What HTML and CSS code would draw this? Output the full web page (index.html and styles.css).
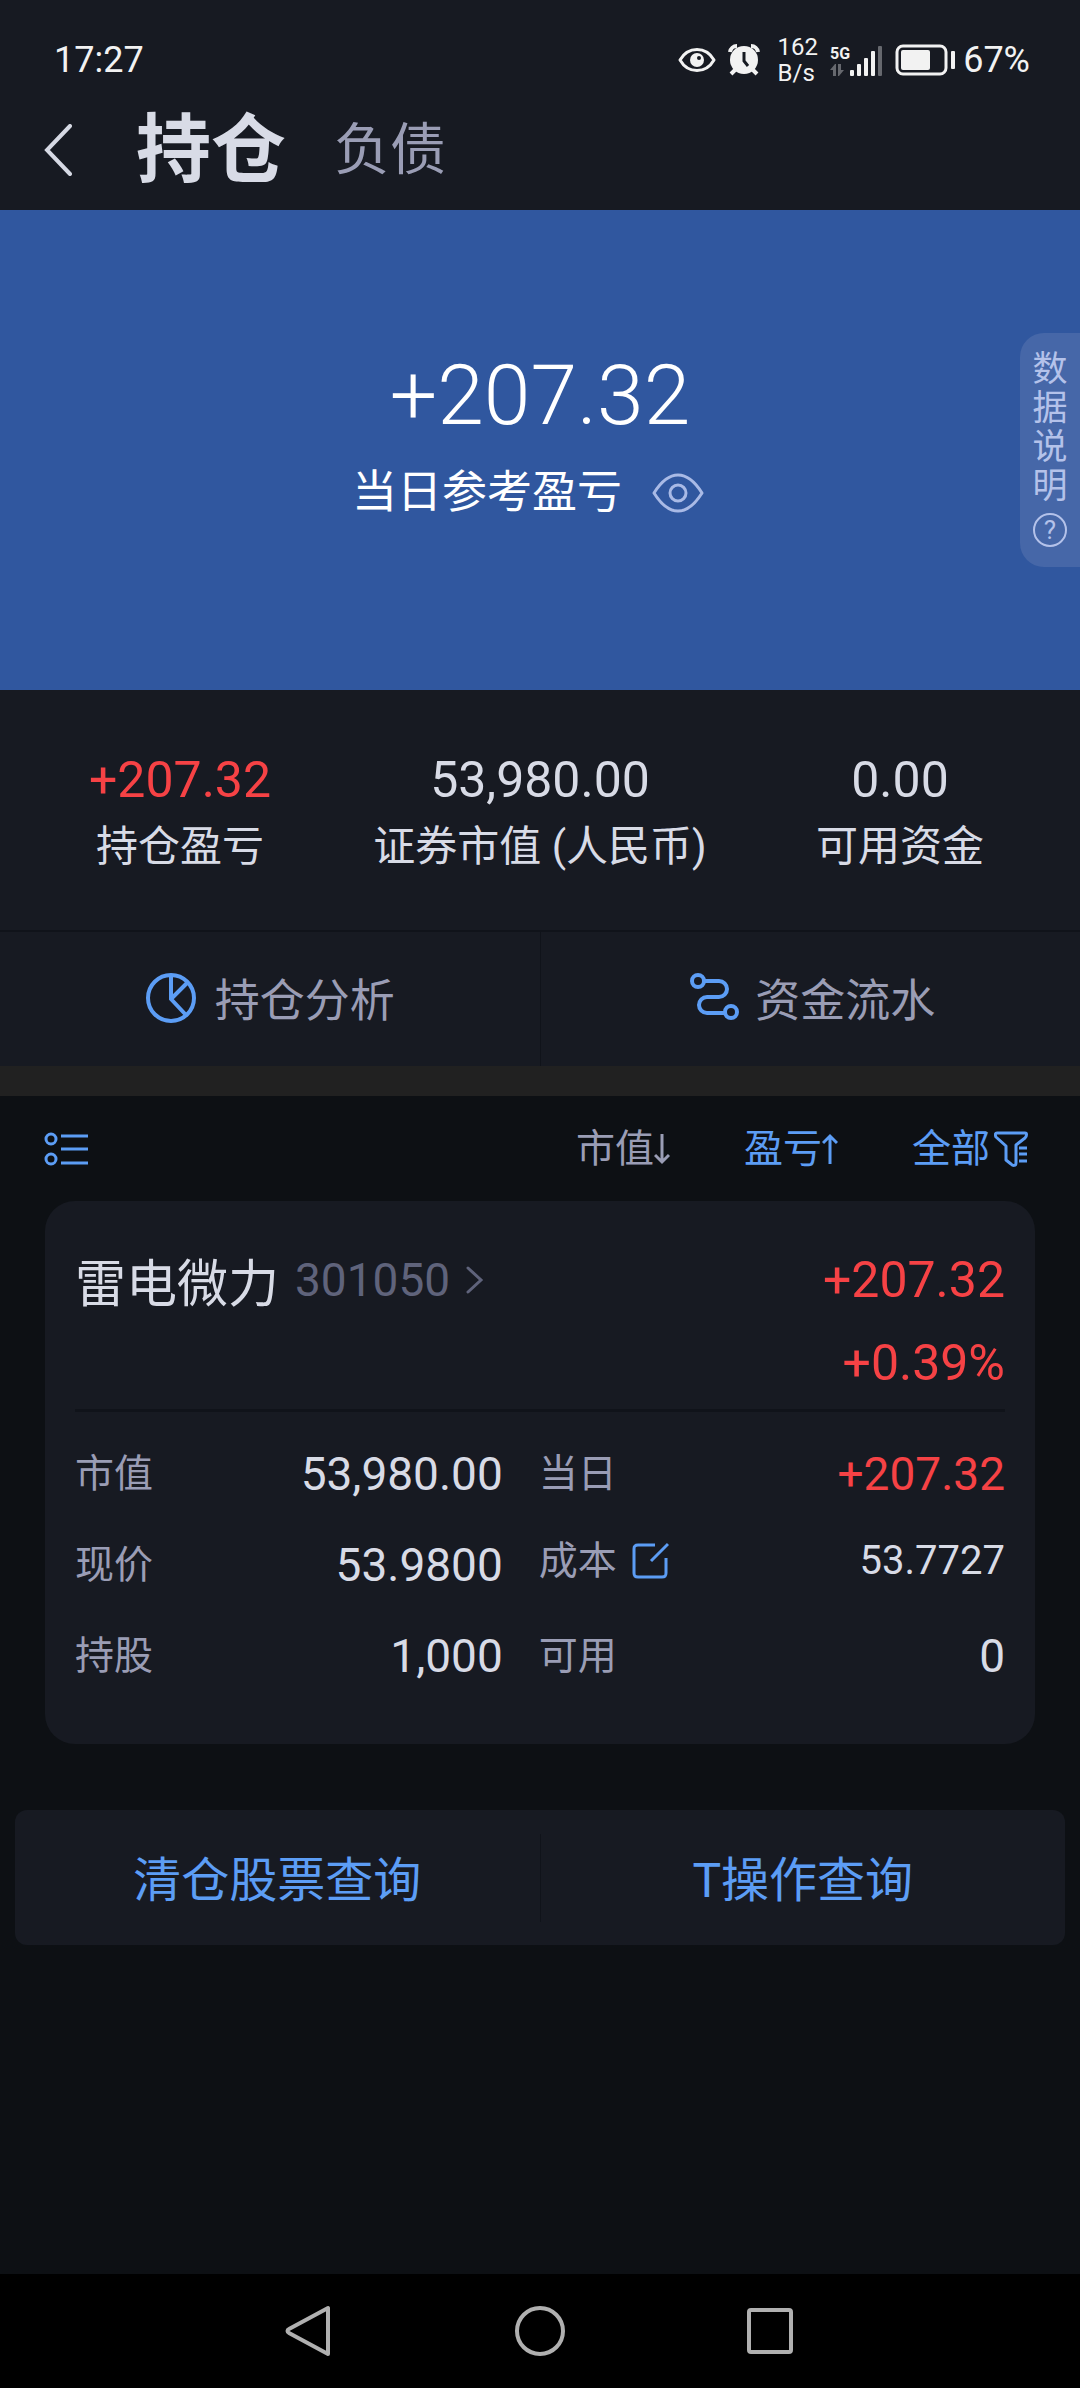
FILE: index.html
```html
<!DOCTYPE html>
<html lang="zh-CN">
<head>
    <meta charset="UTF-8">
    <meta name="viewport" content="width=device-width, initial-scale=1.0">
    <title>持仓</title>
    <link rel="stylesheet" href="styles.css">
</head>
<body>
    <div class="status-bar">
        <span class="status-time">17:27</span>
        <div class="status-icons">
            <svg class="status-eye" width="38" height="26" viewBox="0 0 38 26" fill="none">
                <path d="M2 13C10-1 28-1 36 13C28 27 10 27 2 13Z" stroke="#f2f2f2" stroke-width="3" stroke-linejoin="round"/>
                <circle cx="19" cy="13" r="7" fill="#f2f2f2"/>
                <circle cx="21" cy="11" r="2" fill="#171a22"/>
            </svg>
            <svg class="status-alarm" width="32" height="32" viewBox="0 0 32 32" fill="none">
                <path d="M2 8A7 7 0 0 1 9 2M30 8A7 7 0 0 0 23 2" stroke="#f2f2f2" stroke-width="4"/>
                <path d="M7 26L3 30M25 26L29 30" stroke="#f2f2f2" stroke-width="4"/>
                <circle cx="16" cy="16" r="14" fill="#f2f2f2"/>
                <path d="M16 8V17L20 22" stroke="#171a22" stroke-width="3"/>
            </svg>
            <span class="status-speed">162<br>B/s</span>
            <div class="status-signal">
                <div class="signal-type">
                    <span>5G</span>
                    <svg width="14" height="12" viewBox="0 0 14 12" fill="#66686e">
                        <path d="M0 6L5 0H6V12H3V6ZM8 0H11V6H14L9 12H8Z"/>
                    </svg>
                </div>
                <svg width="33" height="32" viewBox="0 0 33 32" fill="#f2f2f2">
                    <rect x="0" y="26" width="4" height="6" rx="1"/>
                    <rect x="7" y="20" width="4" height="12" rx="1"/>
                    <rect x="14" y="14" width="4" height="18" rx="1"/>
                    <rect x="21" y="7" width="4" height="25" rx="1"/>
                    <rect x="28" y="2" width="4" height="30" rx="1" fill="#66686e"/>
                </svg>
            </div>
            <svg class="status-battery" width="60" height="32" viewBox="0 0 60 32" fill="none">
                <rect x="2" y="2" width="49" height="28" rx="6" stroke="#f2f2f2" stroke-width="3"/>
                <rect x="6" y="6" width="29" height="20" rx="2" fill="#f2f2f2"/>
                <rect x="56" y="7" width="4" height="18" rx="1" fill="#f2f2f2"/>
            </svg>
            <span class="status-percent">67%</span>
        </div>
    </div>

    <header class="header">
        <button class="back-btn" aria-label="返回">
            <svg width="28" height="52" viewBox="0 0 28 52" fill="none" stroke="#d6d9e4" stroke-width="4" stroke-linecap="round">
                <path d="M26 2L3 26L26 50"/>
            </svg>
        </button>
        <nav class="tabs">
            <a href="#" class="tab active">持仓</a>
            <a href="#" class="tab">负债</a>
        </nav>
    </header>

    <section class="hero">
        <div class="hero-value">+207.32</div>
        <div class="hero-label">
            <span>当日参考盈亏</span>
            <button class="eye-btn" aria-label="隐藏金额">
                <svg width="52" height="40" viewBox="0 0 52 40" fill="none" stroke="#a9bae6" stroke-width="3">
                    <path d="M2 20C7 12 15 2 26 2S45 12 50 20C45 28 37 38 26 38S7 28 2 20Z" stroke-linejoin="round"/>
                    <circle cx="26" cy="20" r="8"/>
                </svg>
            </button>
        </div>
        <button class="data-note">
            <span>数</span><span>据</span><span>说</span><span>明</span>
            <i class="help">?</i>
        </button>
    </section>

    <section class="stats">
        <div class="stat">
            <div class="stat-value up">+207.32</div>
            <div class="stat-label">持仓盈亏</div>
        </div>
        <div class="stat">
            <div class="stat-value">53,980.00</div>
            <div class="stat-label">证券市值 (人民币)</div>
        </div>
        <div class="stat">
            <div class="stat-value">0.00</div>
            <div class="stat-label">可用资金</div>
        </div>
    </section>

    <div class="actions">
        <button class="action">
            <svg width="56" height="52" viewBox="0 0 56 52" fill="none" stroke="#5c9df5" stroke-width="4">
                <circle cx="26" cy="27" r="23"/>
                <path d="M26 4V28L41 44M26 28L42 12"/>
            </svg>
            <span>持仓分析</span>
        </button>
        <button class="action">
            <svg width="56" height="52" viewBox="0 0 56 52" fill="none" stroke="#5c9df5" stroke-width="4">
                <circle cx="13" cy="10" r="6"/>
                <circle cx="46" cy="41" r="6"/>
                <path d="M19 10H34A8 8 0 0 1 34 26H22A8 8 0 0 0 22 42H40"/>
            </svg>
            <span>资金流水</span>
        </button>
    </div>

    <main class="positions">
        <div class="toolbar">
            <button class="list-btn" aria-label="列表样式">
                <svg width="44" height="36" viewBox="0 0 44 36" fill="none" stroke="#5c9df5" stroke-width="3">
                    <circle cx="7" cy="8" r="5"/>
                    <circle cx="7" cy="28" r="5"/>
                    <path d="M17 5H44M17 18H44M17 32H44"/>
                </svg>
            </button>
            <div class="sorts">
                <button class="sort"><span>市值</span><svg width="16" height="32" viewBox="0 0 16 32" fill="none" stroke="currentColor" stroke-width="3">
                    <path d="M8 1V29M1 22L8 29L15 22"/>
                </svg></button>
                <button class="sort on"><span>盈亏</span><svg width="16" height="32" viewBox="0 0 16 32" fill="none" stroke="currentColor" stroke-width="3">
                    <path d="M8 31V3M1 10L8 3L15 10"/>
                </svg></button>
                <button class="sort on filter"><span>全部</span><svg width="34" height="36" viewBox="0 0 34 36" fill="none" stroke="currentColor" stroke-width="3" stroke-linejoin="round">
                    <path d="M3 2H31C33 2 33 5 31 7L22 14V32C22 35 19 35 17 33L12 29V15L2 6C1 4 1 2 3 2Z"/>
                    <path d="M25 17H33M25 23H33M25 30H33"/>
                </svg></button>
            </div>
        </div>

        <article class="card">
            <div class="card-head">
                <a href="#" class="stock">
                    <span class="stock-name">雷电微力</span>
                    <span class="stock-code">301050</span>
                    <svg width="18" height="28" viewBox="0 0 18 28" fill="none" stroke="#5f637b" stroke-width="3" stroke-linecap="round">
                        <path d="M2 2L15 14L2 26"/>
                    </svg>
                </a>
                <div class="profit up">
                    <div>+207.32</div>
                    <div>+0.39%</div>
                </div>
            </div>
            <div class="details">
                <dl class="col">
                    <div class="row"><dt>市值</dt><dd>53,980.00</dd></div>
                    <div class="row"><dt>现价</dt><dd>53.9800</dd></div>
                    <div class="row"><dt>持股</dt><dd>1,000</dd></div>
                </dl>
                <dl class="col">
                    <div class="row"><dt>当日</dt><dd class="up">+207.32</dd></div>
                    <div class="row cost">
                        <dt>成本
                            <button class="edit-btn" aria-label="修改成本">
                                <svg width="38" height="38" viewBox="0 0 38 38" fill="none" stroke="#5c9df5" stroke-width="3">
                                    <path d="M24 3H7C4 3 3 4 3 7V31C3 34 4 35 7 35H31C34 35 35 34 35 31V16M20 19L37 2"/>
                                </svg>
                            </button>
                        </dt>
                        <dd>53.7727</dd>
                    </div>
                    <div class="row"><dt>可用</dt><dd>0</dd></div>
                </dl>
            </div>
        </article>

        <div class="queries">
            <button class="query">清仓股票查询</button>
            <button class="query">T操作查询</button>
        </div>
    </main>

    <nav class="nav-bar">
        <button aria-label="后退">
            <svg width="52" height="52" viewBox="0 0 52 52" fill="none" stroke="#b0b0b0" stroke-width="4" stroke-linejoin="round">
                <path d="M44 3V49L5 28C3 27 3 25 5 24Z"/>
            </svg>
        </button>
        <button aria-label="主页">
            <svg width="52" height="52" viewBox="0 0 52 52" fill="none" stroke="#b0b0b0" stroke-width="4">
                <circle cx="26" cy="26" r="23"/>
            </svg>
        </button>
        <button aria-label="最近任务">
            <svg width="52" height="52" viewBox="0 0 52 52" fill="none" stroke="#b0b0b0" stroke-width="4">
                <rect x="5" y="5" width="42" height="42" rx="2"/>
            </svg>
        </button>
    </nav>
</body>
</html>
```
FILE: styles.css
```css
* {
    box-sizing: border-box;
}
body {
    margin: 0;
    min-height: 100vh;
    display: flex;
    flex-direction: column;
    background: #0d1014;
    color: #d8dbe6;
    font-family: Roboto, "Noto Sans CJK SC", sans-serif;
}
button {
    padding: 0;
    border: none;
    background: none;
    color: inherit;
    font: inherit;
    cursor: pointer;
}
a {
    color: inherit;
    text-decoration: none;
}
svg {
    display: block;
    flex-shrink: 0;
}
.up {
    color: #f64245;
}

/* status bar */
.status-bar {
    display: flex;
    justify-content: space-between;
    align-items: center;
    height: 100px;
    padding: 20px 50px 0 54px;
    background: #171a22;
    color: #f2f2f2;
    font-size: 36px;
}
.status-icons {
    display: flex;
    align-items: center;
}
.status-alarm {
    margin-left: 12px;
}
.status-speed {
    margin-left: 18px;
    font-size: 24px;
    line-height: 26px;
}
.status-signal {
    display: flex;
    align-items: flex-end;
    margin-left: 12px;
}
.signal-type {
    font-size: 16px;
    font-weight: 700;
    line-height: 20px;
}
.status-battery {
    margin: 0 8px 0 12px;
}

/* header */
.header {
    display: flex;
    align-items: center;
    height: 110px;
    padding: 0 44px 10px;
    background: #171a22;
}
.tabs {
    display: flex;
    align-items: center;
    gap: 48px;
    margin-left: 64px;
}
.tab {
    color: #9a9db5;
    font-size: 56px;
    line-height: 80px;
}
.tab.active {
    color: #d8dbe6;
    font-size: 75px;
    font-weight: 700;
}

/* daily profit */
.hero {
    position: relative;
    height: 480px;
    padding-top: 136px;
    background: #30579f;
    color: #fff;
    text-align: center;
}
.hero-value {
    font-size: 84px;
    font-weight: 300;
    line-height: 100px;
}
.hero-label {
    display: flex;
    justify-content: center;
    align-items: center;
    margin-top: 14px;
    font-size: 45px;
    line-height: 66px;
}
.eye-btn {
    padding: 0 24px 0 30px;
}
.data-note {
    position: absolute;
    top: 123px;
    right: 0;
    display: flex;
    flex-direction: column;
    align-items: center;
    width: 60px;
    padding: 17px 0 20px;
    border-radius: 24px 0 0 24px;
    background: #4667a8;
    color: #b4c2ea;
    font-size: 35px;
    line-height: 39px;
}
.help {
    width: 34px;
    height: 34px;
    margin-top: 7px;
    border: 2px solid #b4c2ea;
    border-radius: 50%;
    font-size: 26px;
    font-style: normal;
    line-height: 30px;
}

/* summary */
.stats {
    display: flex;
    height: 240px;
    padding-top: 58px;
    background: #171a22;
    text-align: center;
}
.stat {
    flex: 1;
}
.stat-value {
    font-size: 50px;
    line-height: 64px;
}
.stat-label {
    font-size: 42px;
    line-height: 70px;
}
.actions {
    display: flex;
    height: 166px;
    border-top: 2px solid #10131a;
    border-bottom: 30px solid #212121;
    background: #171a22;
}
.action {
    flex: 1;
    display: flex;
    justify-content: center;
    align-items: center;
    gap: 14px;
    padding-bottom: 4px;
    color: #9a9db5;
    font-size: 45px;
}
.action + .action {
    border-left: 1px solid #10131a;
}

/* positions */
.positions {
    flex: 1;
}
.toolbar {
    display: flex;
    justify-content: space-between;
    align-items: center;
    height: 105px;
    padding: 0 52px 0 44px;
}
.sorts {
    display: flex;
    gap: 74px;
}
.sort {
    display: flex;
    align-items: center;
    color: #9a9db5;
    font-size: 39px;
    line-height: 58px;
}
.sort.on {
    color: #5c9df5;
}
.filter svg {
    margin-left: 4px;
}
.card {
    margin: 0 45px;
    padding: 0 30px 50px;
    border-radius: 30px;
    background: #171a22;
}
.card-head {
    display: flex;
    justify-content: space-between;
    height: 211px;
    padding-top: 38px;
    border-bottom: 3px solid #10131a;
}
.stock {
    display: flex;
    align-items: center;
    height: 82px;
}
.stock-name {
    font-size: 51px;
}
.stock-code {
    margin: 0 16px;
    color: #5f637b;
    font-size: 46px;
}
.profit {
    font-size: 50px;
    line-height: 83px;
    text-align: right;
}
.details {
    display: flex;
    gap: 36px;
    padding-top: 34px;
}
.col {
    flex: 1;
    margin: 0;
}
.col:first-child {
    flex: 0 0 46%;
}
.row {
    display: flex;
    justify-content: space-between;
    height: 91px;
    font-size: 46px;
    line-height: 56px;
}
.row:last-child {
    height: 66px;
}
dt {
    display: flex;
    align-items: center;
    gap: 14px;
    height: 56px;
    color: #9a9db5;
    font-size: 39px;
}
dd {
    margin: 0;
}
.cost {
    font-size: 40px;
    line-height: 48px;
}
.cost dt {
    height: 48px;
}
.queries {
    display: flex;
    align-items: center;
    height: 135px;
    margin: 66px 15px 0;
    border-radius: 12px;
    background: #171a22;
}
.query {
    flex: 1;
    height: 88px;
    padding-bottom: 4px;
    color: #5c9df5;
    font-size: 48px;
}
.query + .query {
    border-left: 1px solid #10131a;
}

/* system navigation */
.nav-bar {
    display: flex;
    justify-content: center;
    align-items: center;
    gap: 178px;
    height: 114px;
    background: #000;
}
```
